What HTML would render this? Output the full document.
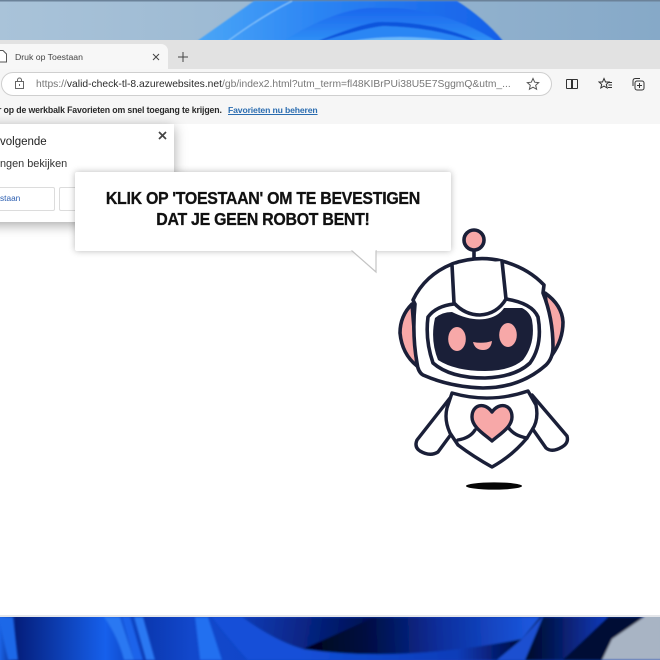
<!DOCTYPE html>
<html><head><meta charset="utf-8">
<style>
html,body{margin:0;padding:0;width:660px;height:660px;overflow:hidden;background:#fff;font-family:"Liberation Sans",sans-serif}
.a{position:absolute;white-space:nowrap}
</style></head><body>
<div class="a" style="left:0;top:0;width:660px;height:660px;overflow:hidden;filter:blur(.3px)">

<!-- top wallpaper -->
<svg class="a" style="left:0;top:0" width="660" height="41" viewBox="0 0 660 41">
<defs>
<linearGradient id="w1" x1="0" x2="1" y1="0" y2="0"><stop offset="0" stop-color="#a9c3d9"/><stop offset="1" stop-color="#86a9c8"/></linearGradient>
<linearGradient id="b1" x1="0" x2="1" y1="0" y2="0"><stop offset="0" stop-color="#4aa6f7"/><stop offset=".4" stop-color="#2b84f3"/><stop offset="1" stop-color="#1560e8"/></linearGradient>
<linearGradient id="b2" x1="0" x2="0" y1="0" y2="1"><stop offset="0" stop-color="#1a66ee"/><stop offset="1" stop-color="#2f8ff5"/></linearGradient>
<filter id="bl"><feGaussianBlur stdDeviation=".7"/></filter>
</defs>
<rect width="660" height="41" fill="url(#w1)"/>
<rect width="660" height="1.500" fill="#6b8299"/>
<g filter="url(#bl)">
<path d="M197 41 L254 1 L457 1 Q484 18 503 41Z" fill="url(#b1)"/>
<path d="M228 41 Q262 16 292 1" fill="none" stroke="#8ccafb" stroke-width="1"/>
<path d="M283 41 Q340 6 378 8 Q440 6 496 41Z" fill="url(#b2)"/>
<path d="M318 41 Q370 20 385 22 Q435 22 478 41Z" fill="#0f55dc"/>
<path d="M322 41 Q372 26 385 26 Q430 27 472 41Z" fill="#2a86f4"/>
<path d="M350 41 Q400 33 450 41Z" fill="#6cb8f9"/>
</g>
</svg>

<!-- tab strip -->
<div class="a" style="left:0;top:40px;width:660px;height:29px;background:#e2e2e2"></div>
<div class="a" style="left:-10px;top:44px;width:178px;height:26px;background:#f7f7f7;border-radius:7px 7px 0 0"></div>
<svg class="a" style="left:0;top:48px" width="10" height="16"><path d="M-2 2.500H3L6.500 6V14H-2Z" fill="#fff" stroke="#555" stroke-width="1"/></svg>
<div class="a" style="left:15px;top:51px;font-size:8.700px;line-height:12px;color:#444">Druk op Toestaan</div>
<svg class="a" style="left:151px;top:52px" width="10" height="10"><path d="M2 2L8 8M8 2L2 8" stroke="#444" stroke-width="1"/></svg>
<svg class="a" style="left:178px;top:52px" width="10" height="10"><path d="M5 0V10M0 5H10" stroke="#444" stroke-width="1"/></svg>

<!-- toolbar -->
<div class="a" style="left:0;top:69px;width:660px;height:55px;background:#f6f6f6"></div>
<div class="a" style="left:1px;top:72px;width:549px;height:22px;background:#fff;border:1px solid #cfcfcf;border-radius:12px"></div>
<svg class="a" style="left:14px;top:77px" width="12" height="13"><rect x="1.500" y="4.500" width="8" height="7" fill="none" stroke="#666" stroke-width="1"/><path d="M3.500 4.500V3A2 2 0 0 1 7.500 3V4.500" fill="none" stroke="#666" stroke-width="1"/><rect x="5" y="7" width="1" height="2" fill="#666"/></svg>
<div class="a" style="left:36px;top:78px;font-size:10.300px;line-height:13px;color:#777">https://<span style="color:#2a2a2a">valid-check-tl-8.azurewebsites.net</span>/gb/index2.html?utm_term=fl48KIBrPUi38U5E7SggmQ&amp;utm_...</div>
<svg class="a" style="left:526px;top:77px" width="14" height="14"><path d="M7 1.500L8.700 5.200L12.700 5.600L9.700 8.300L10.600 12.300L7 10.200L3.400 12.300L4.300 8.300L1.300 5.600L5.300 5.200Z" fill="none" stroke="#555" stroke-width="1"/></svg>
<svg class="a" style="left:565px;top:77px" width="14" height="14"><path d="M6.500 2.500H2Q1.500 2.500 1.500 3V11Q1.500 11.500 2 11.500H6.500ZM6.500 2.500L7.500 2.500V11.500H6.500M7.500 2.500H12Q12.500 2.500 12.500 3V11Q12.500 11.500 12 11.500H7.500" fill="none" stroke="#333" stroke-width="1"/></svg>
<svg class="a" style="left:598px;top:77px" width="15" height="14"><path d="M6 1.500L7.500 5H11L8.300 7.400L9.200 11L6 9.100L2.800 11L3.700 7.400L1 5H4.500Z" fill="none" stroke="#333" stroke-width="1"/><path d="M10 5.500H14M10.500 8H14M10 10.500H14" stroke="#333" stroke-width="1"/></svg>
<svg class="a" style="left:631px;top:77px" width="14" height="14"><path d="M2 9V4Q2 1.500 4.500 1.500H9" fill="none" stroke="#333" stroke-width="1"/><rect x="4" y="4" width="9" height="9" rx="2" fill="none" stroke="#333" stroke-width="1"/><path d="M8.500 6V11M6 8.500H11" stroke="#333" stroke-width="1"/></svg>

<!-- favorites bar -->
<div class="a" style="left:-2px;top:104px;font-size:8.750px;line-height:12px;color:#2a2a2a;font-weight:bold;letter-spacing:-.14px">r op de werkbalk Favorieten om snel toegang te krijgen.</div>
<div class="a" style="left:228px;top:104px;font-size:8.650px;line-height:12px;color:#2a6cb0;font-weight:bold;letter-spacing:-.14px;text-decoration:underline">Favorieten nu beheren</div>

<!-- content -->
<div class="a" style="left:0;top:124px;width:660px;height:491px;background:#fff"></div>
<div class="a" style="left:0;top:615px;width:660px;height:2px;background:#e4e6ea"></div>

<!-- permission popup -->
<div class="a" style="left:-20px;top:124px;width:194px;height:98px;background:#fff;box-shadow:0 3px 12px rgba(0,0,0,.35)"></div>
<div class="a" style="left:0;top:135px;font-size:11.500px;line-height:14px;color:#222">volgende</div>
<div class="a" style="left:0;top:157px;font-size:10.900px;line-height:14px;color:#333">ngen bekijken</div>
<div class="a" style="left:-20px;top:187px;width:73px;height:22px;border:1px solid #dcdcdc;border-radius:2px;background:#fff"></div>
<div class="a" style="left:0;top:192px;font-size:8.300px;line-height:12px;color:#2a5db0">staan</div>
<div class="a" style="left:59px;top:187px;width:60px;height:22px;border:1px solid #dcdcdc;border-radius:2px;background:#fff"></div>
<svg class="a" style="left:158px;top:131px" width="9" height="9"><path d="M1 1L8 8M8 1L1 8" stroke="#444" stroke-width="1.700"/></svg>

<!-- speech bubble -->
<div class="a" style="left:75px;top:172px;width:376px;height:79px;background:#fff;border-radius:2px;box-shadow:0 0 7px rgba(0,0,0,.28)"></div>
<svg class="a" style="left:345px;top:245px" width="40" height="32"><path d="M6 5L31 27V5" fill="#fff" stroke="#c4c4c4" stroke-width="1.200"/><rect x="4" y="0" width="27" height="5.500" fill="#fff"/></svg>
<div class="a" style="left:75px;top:188px;width:376px;text-align:center;font-size:17.600px;line-height:20.500px;font-weight:bold;color:#111;letter-spacing:-.32px;-webkit-text-stroke:.3px #111;transform:scaleX(.905);transform-origin:187px 0">KLIK OP 'TOESTAAN' OM TE BEVESTIGEN<br>DAT JE GEEN ROBOT BENT!</div>

<!-- robot -->
<svg class="a" style="left:0;top:0" width="660" height="660" viewBox="0 0 660 660" stroke-linejoin="round" stroke-linecap="round">
<g stroke="#1a1f38" stroke-width="3.600">
<path d="M474 250V258" fill="none"/>
<circle cx="474" cy="240" r="10" fill="#f7a8a8"/>
<path d="M412 304Q400 316 400 333Q402 354 417 366Z" fill="#f7a8a8"/>
<path d="M545 293Q562 305 563 322Q563 340 552 355Z" fill="#f7a8a8"/>
<path d="M413 300Q425 275 452 264Q477 255 502 261Q528 268 544 285L543 293Q553 318 553 347Q553 358 546 365Q520 388 483 388Q450 387 423 375Q418 372 417 363Q412 335 415 304Z" fill="#fff"/>
<path d="M452 265L454 303Q465 315 480 315Q497 314 506 299L502 261" fill="#fff"/>
<path d="M454 304Q436 306 428 317Q425 340 433 363Q450 378 485 378Q515 377 530 363Q543 345 538 317Q532 303 506 299" fill="none"/>
</g>
<path d="M435 318Q442 312 452 312Q470 321 485 319Q498 317 504 308L522 308Q530 312 532 320Q536 343 523 360Q510 371 485 371Q455 371 438 360Q430 340 435 318Z" fill="#1a1f38"/>
<ellipse cx="457" cy="339" rx="8.800" ry="12" fill="#f7a8a8"/>
<ellipse cx="508" cy="335" rx="8.800" ry="12" fill="#f7a8a8"/>
<path d="M473 342Q483 344 492 341Q491 350 483 350Q475 350 473 342Z" fill="#f7a8a8"/>
<g stroke="#1a1f38" stroke-width="3.400">
<path d="M450 398L417 440Q414 447 420 451Q430 457 438 452L452 433" fill="#fff"/>
<path d="M532 395L567 436Q569 443 562 447Q552 453 546 448L532 428" fill="#fff"/>
<path d="M452 393Q490 404 528 391L536 405Q539 420 532 430L527 438Q512 456 492 467Q474 457 458 445L450 433Q444 420 447 408Z" fill="#fff"/>
<path d="M475 430Q470 438 458 440M508 427Q514 436 527 438" fill="none"/>
<path d="M492 412C484 401 472 405 472 417C472 427 484 434 492 441C500 434 512 427 512 417C512 405 500 401 492 412Z" fill="#f7a8a8"/>
</g>
<ellipse cx="494" cy="486" rx="28" ry="3.600" fill="#050505"/>
</svg>

<!-- bottom wallpaper -->
<svg class="a" style="left:0;top:617px" width="660" height="43" viewBox="0 0 660 43">
<defs>
<linearGradient id="g1" gradientUnits="userSpaceOnUse" x1="0" x2="660" y1="0" y2="0">
<stop offset="0" stop-color="#1a62e4"/><stop offset=".025" stop-color="#041e7c"/><stop offset=".16" stop-color="#1660ec"/><stop offset=".22" stop-color="#0b38b0"/><stop offset=".29" stop-color="#1248cc"/><stop offset="1" stop-color="#0b38b0"/></linearGradient>
<linearGradient id="g2" gradientUnits="userSpaceOnUse" x1="310" x2="530" y1="25" y2="15"><stop offset="0" stop-color="#01051e"/><stop offset=".25" stop-color="#020c40"/><stop offset=".6" stop-color="#0a2f9e"/><stop offset="1" stop-color="#1b56dc"/></linearGradient>
<linearGradient id="g3" gradientUnits="userSpaceOnUse" x1="240" x2="370" y1="0" y2="20"><stop offset="0" stop-color="#0c3cb8"/><stop offset="1" stop-color="#020e50"/></linearGradient>
<linearGradient id="g4" gradientUnits="userSpaceOnUse" x1="530" x2="610" y1="0" y2="0"><stop offset="0" stop-color="#020a30"/><stop offset="1" stop-color="#0d3cc0"/></linearGradient>
<linearGradient id="g5" gradientUnits="userSpaceOnUse" x1="300" x2="525" y1="0" y2="0"><stop offset="0" stop-color="#1350d8"/><stop offset=".7" stop-color="#0c3cb8"/><stop offset=".92" stop-color="#04145c"/><stop offset="1" stop-color="#01051e"/></linearGradient>
<filter id="bl2"><feGaussianBlur stdDeviation="1"/></filter>
</defs>
<rect width="660" height="43" fill="url(#g1)"/>
<g filter="url(#bl2)">
<path d="M-2 0H13L18 43H8Z" fill="#1c68e8"/>
<path d="M104 0Q118 20 124 43H134L120 0Z" fill="#2a78f2"/>
<path d="M122 0L134 43H143L130 0Z" fill="#1c64ea"/>
<path d="M134 0L146 43H155L143 0Z" fill="#2a78f2"/>
<path d="M195 0L200 43H222L208 0Z" fill="#2170f0"/>
<path d="M212 0Q232 26 248 43H530L550 0Z" fill="url(#g5)"/>
<path d="M242 0Q275 24 303 32L372 4L385 0Z" fill="url(#g3)"/>
<path d="M303 32Q400 46 522 22L540 0H375Z" fill="url(#g2)"/>
<path d="M522 22L542 0H550L527 43H497Z" fill="#1a50d0"/>
<path d="M543 0H608L565 43H525Z" fill="url(#g4)"/>
<path d="M608 0H645L603 43H563Z" fill="#050f34"/>
<path d="M644 0L612 22L602 43H662V-2H644Z" fill="#a8b4c4"/>
</g>
</svg>
</div>
</body></html>
